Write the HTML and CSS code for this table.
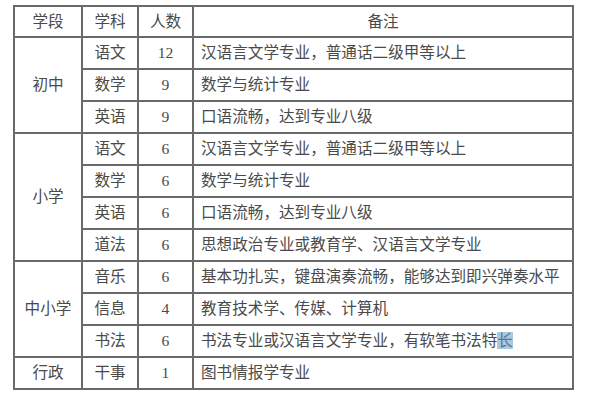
FILE: index.html
```html
<!DOCTYPE html>
<html lang="zh-CN">
<head>
<meta charset="utf-8">
<link rel="stylesheet" href="styles.css">
</head>
<body>
<table class="plan">
  <colgroup>
    <col class="c1"><col class="c2"><col class="c3"><col class="c4">
  </colgroup>
  <thead>
    <tr class="head"><th>学段</th><th>学科</th><th>人数</th><th>备注</th></tr>
  </thead>
  <tbody>
    <tr><td rowspan="3" class="ctr">初中</td><td class="ctr">语文</td><td class="ctr">12</td><td>汉语言文学专业，普通话二级甲等以上</td></tr>
    <tr><td class="ctr">数学</td><td class="ctr">9</td><td>数学与统计专业</td></tr>
    <tr><td class="ctr">英语</td><td class="ctr">9</td><td>口语流畅，达到专业八级</td></tr>
    <tr><td rowspan="4" class="ctr">小学</td><td class="ctr">语文</td><td class="ctr">6</td><td>汉语言文学专业，普通话二级甲等以上</td></tr>
    <tr><td class="ctr">数学</td><td class="ctr">6</td><td>数学与统计专业</td></tr>
    <tr><td class="ctr">英语</td><td class="ctr">6</td><td>口语流畅，达到专业八级</td></tr>
    <tr><td class="ctr">道法</td><td class="ctr">6</td><td>思想政治专业或教育学、汉语言文学专业</td></tr>
    <tr><td rowspan="3" class="ctr">中小学</td><td class="ctr">音乐</td><td class="ctr">6</td><td>基本功扎实，键盘演奏流畅，能够达到即兴弹奏水平</td></tr>
    <tr><td class="ctr">信息</td><td class="ctr">4</td><td>教育技术学、传媒、计算机</td></tr>
    <tr><td class="ctr">书法</td><td class="ctr">6</td><td>书法专业或汉语言文学专业，有软笔书法特<span class="sel">长</span></td></tr>
    <tr><td class="ctr">行政</td><td class="ctr">干事</td><td class="ctr">1</td><td>图书情报学专业</td></tr>
  </tbody>
</table>
</body>
</html>
```
FILE: styles.css
```css
html, body {
  margin: 0;
  padding: 0;
  background: #ffffff;
}
body {
  padding: 5px 0 0 13px;
  font-family: "Liberation Serif", "Noto Sans CJK SC", serif;
  color: #4a4a4a;
}
.plan {
  border-collapse: collapse;
  table-layout: fixed;
  width: 559px;
  font-size: 15.6px;
}
.c1 { width: 68px; }
.c2 { width: 56px; }
.c3 { width: 55px; }
.c4 { width: 380px; }
.plan th, .plan td {
  border: 2px solid #6a6a6a;
  height: 30px;
  padding: 0 0 0 7px;
  text-align: left;
  font-weight: normal;
  line-height: 20px;
  white-space: nowrap;
  overflow: hidden;
}
.plan .head th {
  height: 29px;
  text-align: center;
  padding: 0;
}
.plan td.ctr {
  text-align: center;
  padding: 0;
}
.sel {
  background: #a9c9e2;
  color: #5a7890;
}
```
